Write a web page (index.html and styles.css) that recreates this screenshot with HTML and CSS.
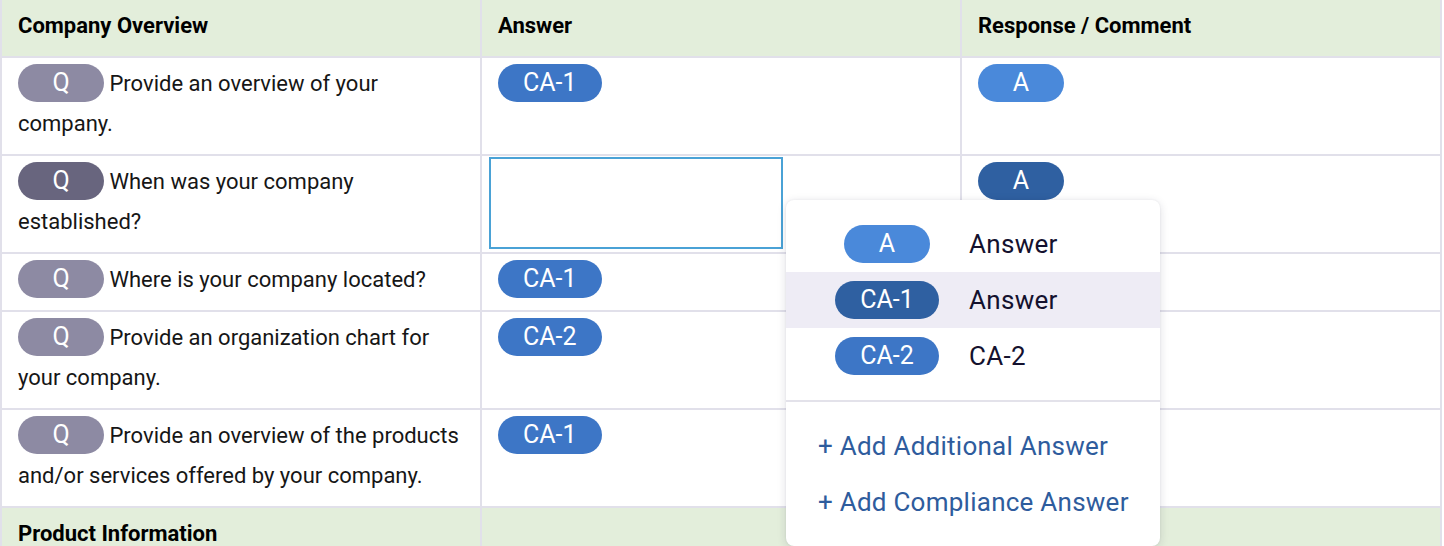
FILE: index.html
```html
<!DOCTYPE html>
<html lang="en">
<head>
<meta charset="utf-8">
<title>Questionnaire</title>
<link rel="stylesheet" href="styles.css">
</head>
<body>
<div class="sheet">
  <div class="cell head">Company Overview</div>
  <div class="cell head">Answer</div>
  <div class="cell head">Response / Comment</div>

  <div class="cell"><span class="pill q">Q</span> <span class="qtext">Provide an overview of your company.</span></div>
  <div class="cell"><span class="pill ca">CA-1</span></div>
  <div class="cell"><span class="pill a">A</span></div>

  <div class="cell"><span class="pill q q-dark">Q</span> <span class="qtext">When was your company established?</span></div>
  <div class="cell editing"><div class="editor"></div></div>
  <div class="cell"><span class="pill a a-dark">A</span></div>

  <div class="cell"><span class="pill q">Q</span> <span class="qtext">Where is your company located?</span></div>
  <div class="cell"><span class="pill ca">CA-1</span></div>
  <div class="cell"></div>

  <div class="cell"><span class="pill q">Q</span> <span class="qtext">Provide an organization chart for your company.</span></div>
  <div class="cell"><span class="pill ca">CA-2</span></div>
  <div class="cell"></div>

  <div class="cell"><span class="pill q">Q</span> <span class="qtext">Provide an overview of the products and/or services offered by your company.</span></div>
  <div class="cell"><span class="pill ca">CA-1</span></div>
  <div class="cell"></div>

  <div class="cell head">Product Information</div>
  <div class="cell head"></div>
  <div class="cell head"></div>
</div>

<div class="menu">
  <div class="menu-items">
    <div class="menu-item"><span class="menu-pill"><span class="pill a">A</span></span><span class="menu-label">Answer</span></div>
    <div class="menu-item active"><span class="menu-pill"><span class="pill ca ca-dark">CA-1</span></span><span class="menu-label">Answer</span></div>
    <div class="menu-item"><span class="menu-pill"><span class="pill ca">CA-2</span></span><span class="menu-label">CA-2</span></div>
  </div>
  <div class="menu-actions">
    <div class="menu-link">+ Add Additional Answer</div>
    <div class="menu-link">+ Add Compliance Answer</div>
  </div>
</div>
</body>
</html>
```

FILE: styles.css
```css
html, body {
  margin: 0;
  padding: 0;
  background: #ffffff;
}

body {
  font-family: Roboto, "Liberation Sans", Arial, sans-serif;
  color: #161616;
  position: relative;
  overflow: hidden;
}

.sheet {
  display: grid;
  grid-template-columns: 478px 478px 478px;
  gap: 2px;
  padding: 0 2px;
  width: max-content;
  background: #e1e0ea;
}

.cell {
  background: #ffffff;
  padding: 6px 16px 10px 16px;
  font-size: 22px;
  line-height: 40px;
  min-height: 40px;
}

.cell.head {
  background: #e3eedb;
  font-weight: 700;
  color: #000000;
}

.cell.editing {
  padding: 1px 0 0 7px;
}

.editor {
  box-sizing: border-box;
  width: 294px;
  height: 92px;
  border: 2px solid #4aa2d6;
  background: #ffffff;
}

.pill {
  display: inline-block;
  box-sizing: border-box;
  min-width: 86px;
  height: 38px;
  padding: 0 25px;
  border-radius: 19px;
  font-size: 25px;
  line-height: 38px;
  text-align: center;
  color: #ffffff;
  font-weight: 400;
}

.pill.q {
  background: #8d8aa3;
}

.pill.q-dark {
  background: #68657e;
}

.pill.ca {
  background: #3d76c6;
}

.pill.ca-dark {
  background: #2f60a1;
}

.pill.a {
  background: #4a89da;
}

.pill.a-dark {
  background: #2f60a1;
}

.menu {
  position: absolute;
  left: 786px;
  top: 200px;
  width: 374px;
  background: #ffffff;
  border-radius: 8px;
  box-shadow: 0 2px 10px rgba(30, 28, 60, 0.14), 0 0 2px rgba(30, 28, 60, 0.08);
}

.menu-items {
  padding: 16px 0;
  border-bottom: 2px solid #e3e2ea;
}

.menu-item {
  display: flex;
  align-items: center;
  height: 56px;
  padding: 0 32px;
}

.menu-item.active {
  background: #eeecf5;
}

.menu-pill {
  width: 138px;
  display: flex;
  justify-content: center;
  margin-right: 13px;
}

.menu-label {
  font-size: 26px;
  letter-spacing: 0.3px;
  color: #14112e;
  white-space: nowrap;
}

.menu-actions {
  padding: 16px 0;
}

.menu-link {
  height: 56px;
  display: flex;
  align-items: center;
  padding: 0 24px 0 32px;
  font-size: 26px;
  letter-spacing: 0.25px;
  color: #2e5c9d;
  white-space: nowrap;
}
```
